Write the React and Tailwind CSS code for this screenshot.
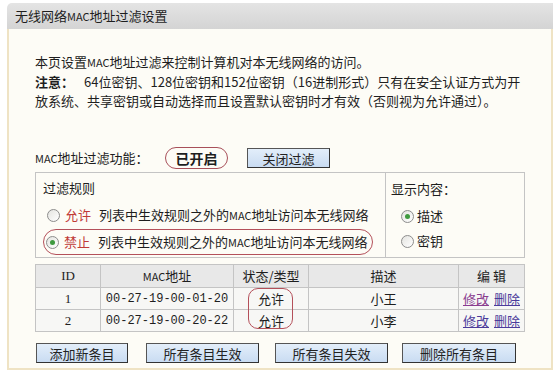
import React from 'react';

const cjk = "font-['Noto_Sans_CJK_SC','Noto_Sans',sans-serif]";

// the MAC letters are set smaller in the original page font
const M = () => <span className="text-[11px]">MAC</span>;

function Radio({ checked }) {
  return (
    <span className="inline-flex items-center justify-center w-[13px] h-[13px] rounded-full border border-[#8c8c8c] bg-gradient-to-br from-[#e4e4e0] to-white shrink-0">
      {checked && <span className="w-[5px] h-[5px] rounded-full bg-[#3f9a3f]" />}
    </span>
  );
}

function Btn({ children, className }) {
  return (
    <button className={`h-[20px] border border-[#555] border-r-[#333] border-b-[#333] bg-gradient-to-b from-[#e3eefa] to-[#c9dcf2] text-[13px] leading-none text-[#222] ${className}`}>
      {children}
    </button>
  );
}

export default function App() {
  const rows = [
    { id: 1, mac: '00-27-19-00-01-20', state: '允许', desc: '小王', edit: 'text-[#8a3d8f]' },
    { id: 2, mac: '00-27-19-00-20-22', state: '允许', desc: '小李', edit: 'text-[#4b3b9b]' },
  ];

  return (
    <div className={`w-[560px] h-[372px] bg-white pt-[3px] pl-[7px] pr-[7px] text-[#1e1e1e] ${cjk}`}>
      {/* title bar */}
      <div className="h-[26px] rounded-tl-[5px] bg-gradient-to-b from-[#e4e4e4] to-[#d4d4d4] flex items-center pl-[8px] text-[13px]">
        无线网络<M />地址过滤设置
      </div>

      {/* body */}
      <div className="h-[341px] border-l-2 border-r-2 border-b-2 border-[#efe3c4] bg-[#fdfcf6] pl-[26px] pt-[23px]">
        <div className="text-[13px] leading-[19px] whitespace-nowrap">
          <div>本页设置<M />地址过滤来控制计算机对本无线网络的访问。</div>
          <div>
            <span className="font-bold">注意：</span>
            <span className="ml-[10px]">64位密钥、128位密钥和152位密钥（16进制形式）只有在安全认证方式为开</span>
          </div>
          <div>放系统、共享密钥或自动选择而且设置默认密钥时才有效（否则视为允许通过）。</div>
        </div>

        {/* MAC filter state */}
        <div className="mt-[37px] h-[22px] flex items-center text-[13px]">
          <span className="w-[130px]"><M />地址过滤功能：</span>
          <span className="h-[22px] w-[63px] rounded-full border border-[#a8505a] flex items-center justify-center font-bold text-[14px]">
            已开启
          </span>
          <Btn className="ml-[19px] w-[83px] h-[18px]">关闭过滤</Btn>
        </div>

        {/* rules box */}
        <div className="mt-[3px] w-[490px] h-[86px] border border-[#c4c4c4] flex text-[13px]">
          <div className="w-[350px] border-r border-[#c4c4c4] pl-[7px] pt-[5px]">
            <div className="h-[20px] leading-[20px]">过滤规则</div>
            <div className="mt-[4px] h-[26px] flex items-center pl-[3px] border border-transparent rounded-full whitespace-nowrap">
              <Radio />
              <span className="ml-[5px] text-[#c03a36]">允许</span>
              <span className="ml-[8px]">列表中生效规则之外的<M />地址访问本无线网络</span>
            </div>
            <div className="mt-[1px] w-[330px] h-[26px] flex items-center pl-[2px] border border-[#b4505a] rounded-full whitespace-nowrap">
              <Radio checked />
              <span className="ml-[5px] text-[#c03a36]">禁止</span>
              <span className="ml-[8px]">列表中生效规则之外的<M />地址访问本无线网络</span>
            </div>
          </div>
          <div className="flex-1 pl-[5px] pt-[6px]">
            <div className="h-[20px] leading-[20px]">显示内容：</div>
            <div className="mt-[5px] h-[24px] flex items-center pl-[10px]">
              <Radio checked />
              <span className="ml-[3px]">描述</span>
            </div>
            <div className="mt-[1px] h-[24px] flex items-center pl-[10px]">
              <Radio />
              <span className="ml-[3px]">密钥</span>
            </div>
          </div>
        </div>

        {/* table */}
        <div className="relative mt-[6px] w-[490px]">
          <table className="w-[490px] border-collapse text-[13px] text-center">
            <thead>
              <tr className="h-[23px] bg-[#e8e8e8]">
                <th className="w-[65px] border border-[#c4c4c4] font-normal font-['Liberation_Serif',serif]">ID</th>
                <th className="w-[133px] border border-[#c4c4c4] font-normal"><M />地址</th>
                <th className="w-[75px] border border-[#c4c4c4] font-normal">状态/类型</th>
                <th className="w-[150px] border border-[#c4c4c4] font-normal">描述</th>
                <th className="border border-[#c4c4c4] font-normal">编 辑</th>
              </tr>
            </thead>
            <tbody>
              {rows.map((r) => (
                <tr key={r.id} className="h-[22px] bg-[#f7f7f5]">
                  <td className="border border-[#c4c4c4] font-['Liberation_Serif',serif]">{r.id}</td>
                  <td className="border border-[#c4c4c4] font-['Liberation_Mono',monospace] text-[12px]">{r.mac}</td>
                  <td className="border border-[#c4c4c4]">{r.state}</td>
                  <td className="border border-[#c4c4c4]">{r.desc}</td>
                  <td className="border border-[#c4c4c4]">
                    <a href="#" className={`underline ${r.edit}`}>修改</a>
                    <a href="#" className="underline text-[#4b3b9b] ml-[5px]">删除</a>
                  </td>
                </tr>
              ))}
            </tbody>
          </table>
          {/* annotation oval over state column */}
          <div className="absolute left-[213px] top-[24px] w-[45px] h-[41px] rounded-[10px] border border-[#b4505a]" />
        </div>

        {/* buttons */}
        <div className="mt-[11px] flex items-center">
          <Btn className="ml-[1px] w-[92px]">添加新条目</Btn>
          <Btn className="ml-[18px] w-[113px]">所有条目生效</Btn>
          <Btn className="ml-[16px] w-[113px]">所有条目失效</Btn>
          <Btn className="ml-[14px] w-[114px]">删除所有条目</Btn>
        </div>
      </div>
    </div>
  );
}
